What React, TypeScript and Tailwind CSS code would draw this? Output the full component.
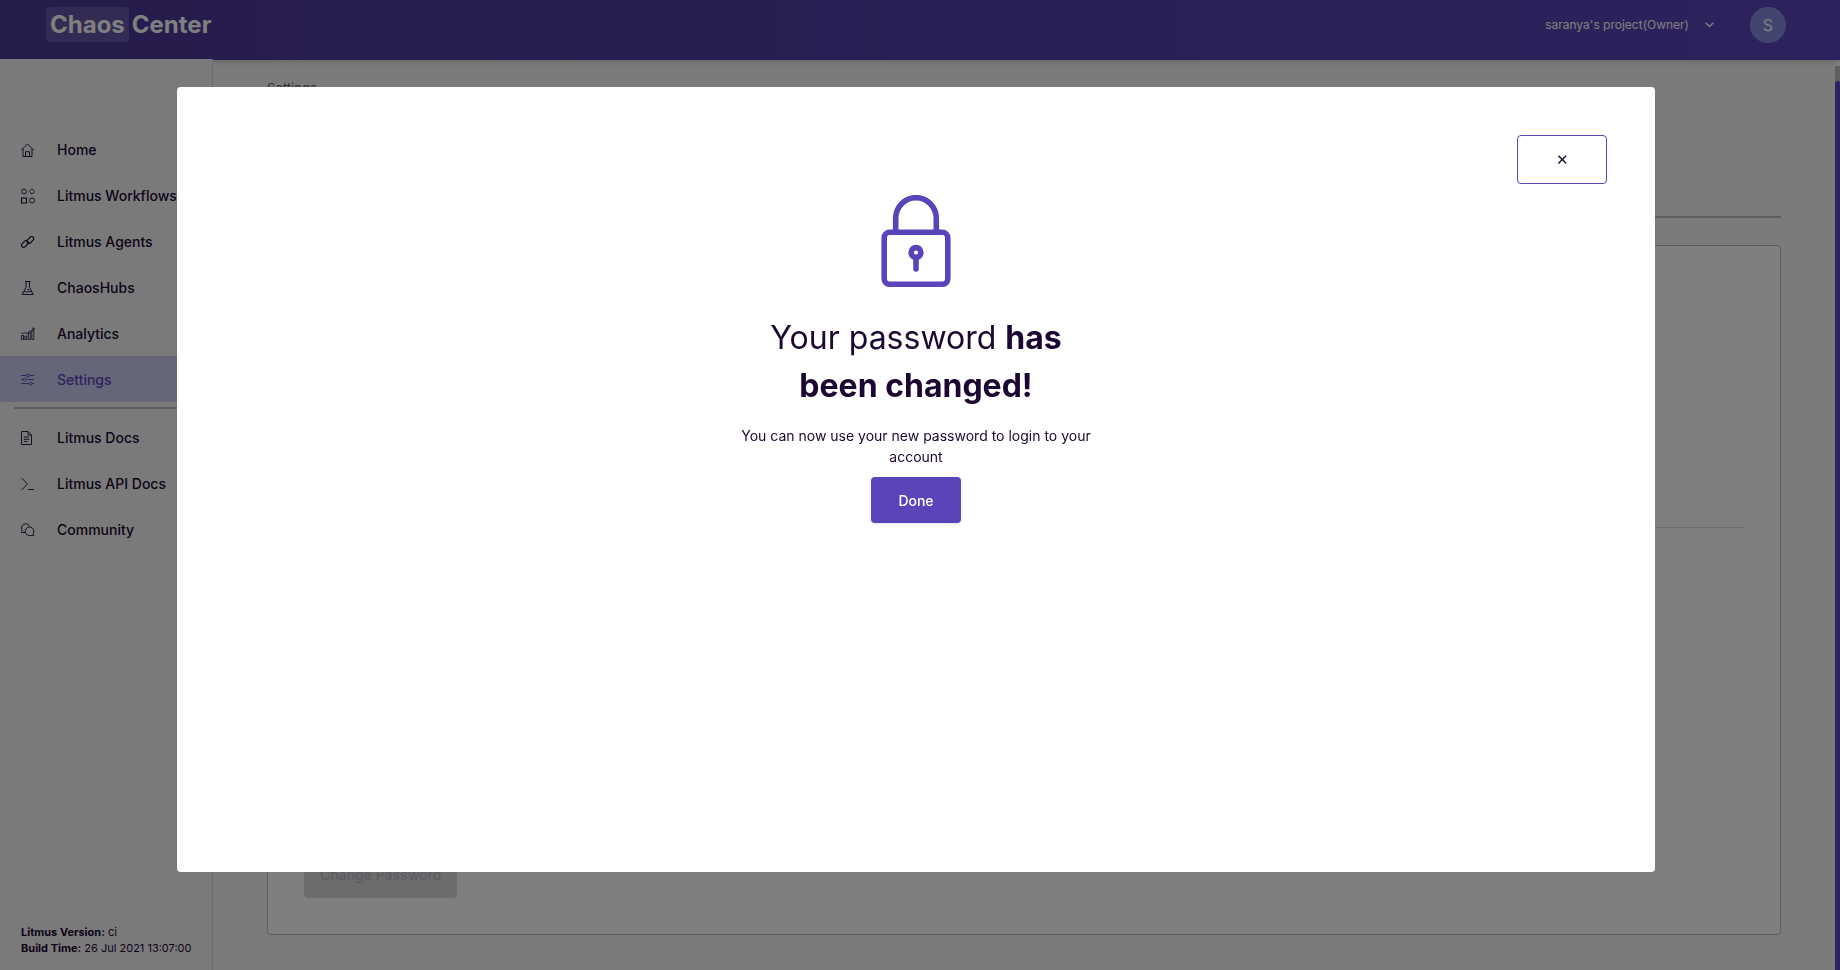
import React from 'react';

const iconProps = {
  width: 14,
  height: 14,
  viewBox: '0 0 14 14',
  fill: 'none',
  stroke: 'currentColor',
  strokeWidth: 0.9,
  'aria-hidden': true,
} as const;

const HomeIcon = () => (
  <svg {...iconProps}>
    <path d="M.3 7.200 6.500.9l6.200 6.300M2 5.700v7.800h9V5.700M4.500 13.500V8.700h4v4.800" />
  </svg>
);

const WorkflowsIcon = () => (
  <svg {...iconProps} height={16} viewBox="0 0 14 16">
    <circle cx="3" cy="3.500" r="2.400" />
    <path d="m11 .8 2.700 2.700L11 6.200 8.300 3.500Z" />
    <path d="M.5 10h5v5h-5Z" strokeWidth={1.1} />
    <circle cx="11" cy="12.500" r="2.500" />
  </svg>
);

const AgentsIcon = () => (
  <svg {...iconProps} strokeWidth={1.1}>
    <rect x="-3.900" y="-2.100" width="7.800" height="4.200" rx="2.100" transform="translate(3.900 8.800) rotate(-45)" />
    <rect x="-3.900" y="-2.100" width="7.800" height="4.200" rx="2.100" transform="translate(9.300 5) rotate(-45)" />
  </svg>
);

const HubsIcon = () => (
  <svg {...iconProps}>
    <path d="M4 .5h5.500M5 .5v5.800L1.200 13.500h11L8.500 6.300V.5M2.800 10.800c1.500-1.200 2.500.8 4 0s2.500-.8 4 0M6 8.500h1.800" />
  </svg>
);

const AnalyticsIcon = () => (
  <svg {...iconProps} strokeWidth={0.8}>
    <path d="M.5 12.500V8.500h2v4ZM3.800 12.500V9.200h2v3.300ZM7.300 12.500V5.800h2v6.700ZM10.800 12.500v-9h2v9Z" />
    <path d="m.3 5.500 2.400 1.300 1.800-1.500 2 1.500L8.500 4l2 .3L13 1.300M10.800 1.200h2.300v2" />
  </svg>
);

const SettingsIcon = () => (
  <svg {...iconProps}>
    <path d="M0 2.500h5.500M8.500 2.500H13M0 6.500h2.200M5.200 6.500H13M0 10.500h8M11 10.500h2" />
    <circle cx="7" cy="2.500" r="1.500" />
    <circle cx="3.700" cy="6.500" r="1.500" />
    <circle cx="9.500" cy="10.500" r="1.500" />
  </svg>
);

const DocsIcon = () => (
  <svg {...iconProps}>
    <path d="M.5.5h6.500l3.500 3.500v9.500H.5ZM7 .5v3.500h3.500M2.800 6h5.400M2.800 8.300h5.400M2.800 10.500h3.700" />
  </svg>
);

const ApiIcon = () => (
  <svg {...iconProps}>
    <path d="m.5.8 6 6.200-6 6.200M7 12.500h6" />
  </svg>
);

const CommunityIcon = () => (
  <svg {...iconProps}>
    <path d="M4 9.500H.5l.6-2.200A4.200 4.200 0 0 1 4.800.9c2 0 3.200.9 3.900 2.500" />
    <path d="M12.600 12.600H8.500A4.300 4.300 0 1 1 12.200 10.500Z" />
  </svg>
);

type Item = { label: string; icon: React.ReactNode; active?: boolean };

const mainItems: Item[] = [
  { label: 'Home', icon: <HomeIcon /> },
  { label: 'Litmus Workflows', icon: <WorkflowsIcon /> },
  { label: 'Litmus Agents', icon: <AgentsIcon /> },
  { label: 'ChaosHubs', icon: <HubsIcon /> },
  { label: 'Analytics', icon: <AnalyticsIcon /> },
  { label: 'Settings', icon: <SettingsIcon />, active: true },
];

const moreItems: Item[] = [
  { label: 'Litmus Docs', icon: <DocsIcon /> },
  { label: 'Litmus API Docs', icon: <ApiIcon /> },
  { label: 'Community', icon: <CommunityIcon /> },
];

function NavList({ items }: { items: Item[] }) {
  return (
    <ul>
      {items.map(({ label, icon, active }) => (
        <li key={label}>
          <a
            href="#"
            aria-current={active ? 'page' : undefined}
            className={`flex h-[46px] items-center pt-0.5 pl-[21px] text-sm font-medium whitespace-nowrap ${
              active ? 'bg-[#cbcef0] text-[#5b44ba]' : 'text-[#1c0732]'
            }`}
          >
            <span className="w-9 shrink-0">{icon}</span>
            {label}
          </a>
        </li>
      ))}
    </ul>
  );
}

function Header() {
  return (
    <header className="z-10 flex h-[60px] shrink-0 items-start justify-between bg-linear-to-r from-[#4c3896] to-[#5b44ba] pt-[7px] pr-[54px] pl-[46px] text-white shadow-md">
      <div className="flex items-center gap-[3px] text-2xl font-bold">
        <span className="flex h-[35px] items-center rounded-sm bg-white/15 px-1">Chaos</span>
        <span>Center</span>
      </div>
      <div className="flex items-center">
        <button type="button" className="flex items-center gap-4 text-xs">
          saranya's project(Owner)
          <svg width="9" height="6" viewBox="0 0 9 6" fill="none" stroke="currentColor" strokeWidth="1.400" aria-hidden="true">
            <path d="m.7.8 3.800 3.800L8.300.8" />
          </svg>
        </button>
        <span className="ml-9 flex size-9 items-center justify-center rounded-full bg-[#858cdd] text-base">S</span>
      </div>
    </header>
  );
}

function Sidebar() {
  return (
    <aside className="z-20 -mt-px flex w-[213px] shrink-0 flex-col border-r border-[#d8d8d8] bg-[#f5f5f5] pt-[67px] pb-[14px]">
      <nav>
        <NavList items={mainItems} />
        <hr className="mt-[5px] mb-[5px] ml-[14px] border-t-2 border-[#bababa]" />
        <NavList items={moreItems} />
      </nav>
      <div className="mt-auto pl-[21px] text-[11px] leading-4 text-[#1c0732]">
        <p>
          <b>Litmus Version:</b> ci
        </p>
        <p>
          <b>Build Time:</b> 26 Jul 2021 13:07:00
        </p>
      </div>
    </aside>
  );
}

function SettingsPage() {
  return (
    <main className="flex flex-1 flex-col bg-[#f6f6f6] pt-5 pr-[54px] pb-[35px] pl-[54px]">
      <p className="text-[13px] leading-4 text-[#536174]">Settings</p>
      <hr className="mt-[120px] border-t-2 border-[#bdbdbd]" />
      <section className="mt-[27px] flex flex-1 flex-col justify-between rounded-sm border border-[#bdbdbd] bg-white px-9 pb-9">
        <hr className="mt-[281px] border-[#dcdcdc]" />
        <button type="button" disabled className="h-[46px] self-start rounded-sm bg-[#d9d9d9] px-4 text-sm font-medium text-[#b9b9c6]">
          Change Password
        </button>
      </section>
    </main>
  );
}

function LockIcon() {
  return (
    <svg width="70" height="92" viewBox="0 0 70 92" fill="none" stroke="#5b44ba" strokeWidth="5.600" aria-hidden="true">
      <rect x="3.200" y="37.300" width="63.600" height="52" rx="5.500" />
      <path d="M14.700 37V23a20.300 20.300 0 0 1 40.600 0v14" />
      <circle cx="35" cy="57.500" r="4.900" />
      <path d="M35 63v11" strokeLinecap="round" />
    </svg>
  );
}

function PasswordChangedDialog() {
  return (
    <div className="fixed inset-0 z-30 flex bg-black/50 pt-[87px] pr-[185px] pb-[98px] pl-[177px]">
      <div
        role="dialog"
        aria-modal="true"
        aria-labelledby="dialog-title"
        className="flex flex-1 flex-col items-center overflow-auto rounded-sm bg-white px-12 pt-12 text-[#1c0732]"
      >
        <button
          type="button"
          className="h-[49px] w-[90px] shrink-0 self-end rounded-sm border border-[#5b44ba] pt-0.5 text-[15px] font-medium"
        >
          ✕
        </button>
        <div className="flex w-[360px] flex-col items-center pt-[11px] text-center">
          <LockIcon />
          <h1 id="dialog-title" className="mt-[27px] text-[32px] leading-[48px] font-normal">
            Your password <strong className="font-bold">has</strong>
            <br />
            <strong className="font-bold">been changed!</strong>
          </h1>
          <p className="mt-[15px] text-sm leading-[21px]">
            You can now use your new password to login to your account
          </p>
          <button
            type="button"
            className="mt-2.5 h-[46px] w-[90px] rounded-sm bg-[#5b44ba] pt-0.5 text-sm font-medium text-white shadow"
          >
            Done
          </button>
        </div>
      </div>
    </div>
  );
}

export default function App() {
  return (
    <div className="flex min-h-screen flex-col font-['Inter',sans-serif]">
      <Header />
      <div className="flex flex-1">
        <Sidebar />
        <SettingsPage />
        <div className="mt-[6px] w-[5px] shrink-0 bg-[#c0c0c0] pt-[15px]">
          <div className="h-full rounded-t-sm bg-[#5b44ba]" />
        </div>
      </div>
      <PasswordChangedDialog />
    </div>
  );
}
